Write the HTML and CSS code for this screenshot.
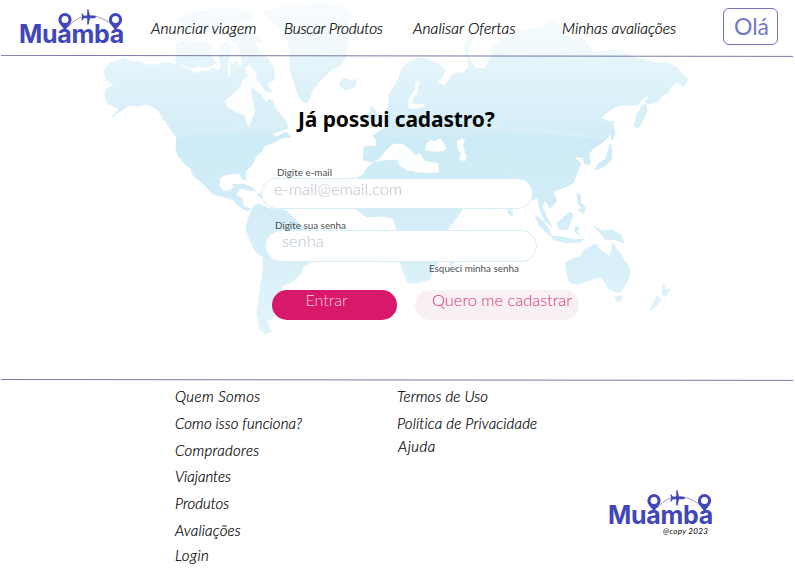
FILE: index.html
```html
<!DOCTYPE html>
<html lang="pt-BR">
<head>
<meta charset="utf-8">
<title>Muamba</title>
<link rel="stylesheet" href="styles.css">
</head>
<body>
<svg class="map" viewBox="0 0 795 380" aria-hidden="true">
  <defs>
    <linearGradient id="land" x1="0" y1="0" x2="0" y2="350" gradientUnits="userSpaceOnUse">
      <stop offset="0" stop-color="#f2f9fd"/><stop offset=".15" stop-color="#e6f5fb"/>
      <stop offset=".35" stop-color="#d7eff8"/><stop offset=".4" stop-color="#cdebf6"/>
      <stop offset=".6" stop-color="#d3edf8"/><stop offset="1" stop-color="#e4f5fb"/>
    </linearGradient>
  </defs>
  <g class="land" fill="url(#land)" stroke="url(#land)">
    <path d="M104 72L107 66 110 63 117 61 124 58 132 62 140 62 147 65 155 65 163 63 170 63 180 66 186 69 192 71 197 74 202 71 208 72 214 68 218 71 222 66 228 60 233 65 236 60 240 68 244 60 249 66 250 75 246 80 252 88 257 92 260 94 266 102 269 99 273 101 275 108 278 112 285 120 288 128 280 131 271 134 277 137 286 132 291 137 282 138 272 143 264 146 262 151 256 156 252 165 245 172 246 180 242 178 239 173 228 174 220 177 219 186 224 192 231 190 235 186 240 187 236 195 242 199 244 207 251 209 247 211 239 206 232 199 224 197 213 194 206 187 200 180 193 170 186 165 178 156 176 147 177 138 170 128 163 118 157 109 147 104 138 106 130 105 122 110 112 117 119 109 108 104 105 96 106 89 114 85 107 80z"/>
    <path d="M191 170L199 179 206 187 202 183 194 176z"/>
    <path d="M176 44L185 40 194 43 203 41 212 46 211 56 216 63 208 67 199 66 192 68 184 65 176 65zM221 44L227 42 231 49 229 60 233 67 229 72 222 68 219 57zM237 46L247 42 256 45 262 54 269 60 275 71 274 80 267 84 272 93 265 90 259 81 251 78 246 71 250 64 242 60z"/>
    <path d="M176 20L194 12 220 8 240 9 254 15 246 22 228 26 220 34 204 31 192 33zM230 35L244 29 254 34 262 41 248 45 233 43z"/>
    <path d="M263 12L285 6 323 3 346 9 354 14 348 22 349 36 346 56 341 65 330 71 320 81 312 90 309 100 306 103 301 100 297 91 293 79 290 70 290 56 288 42 280 27 268 18z"/>
    <path d="M340 81L345 78 351 81 356 79 356 84 353 88 345 90 340 86z"/>
    <path d="M232 185L243 184 251 187 256 191 248 190 240 188zM257 194L265 194 268 196 260 197z"/>
    <path d="M253 207L258 204 270 209 285 210 293 217 301 225 313 234 321 240 320 250 312 262 303 267 300 275 290 283 282 286 280 296 276 306 274 317 267 321 271 332 266 334 260 330 257 313 259 300 261 285 263 270 263 257 255 251 250 240 246 229 248 220z"/>
    <path d="M368 117L371 111 371 106 375 110 378 116 377 121 369 122zM361 116L366 115 366 120 361 122z"/>
    <path d="M363 160L364 153 364 147 377 146 376 139 373 136 380 131 386 126 389 121 387 112 389 103 389 94 397 82 403 67 411 61 420 58 430 60 440 65 445 70 443 76 437 83 445 86 451 76 457 73 463 73 469 67 468 57 470 60 475 68 485 69 491 57 493 48 497 43 507 36 517 33 530 29 540 27 550 20 558 23 563 30 573 40 580 38 587 42 593 53 603 51 617 50 625 52 633 57 645 60 657 63 667 63 677 68 688 80 683 87 677 82 670 88 668 93 663 95 658 102 648 104 645 102 650 94 644 98 637 105 628 105 620 105 610 110 600 118 610 122 611 130 608 137 603 142 595 147 589 153 590 164 585 164 583 157 573 157 581 163 577 173 573 183 565 187 557 190 553 192 557 200 554 204 550 208 545 200 542 207 546 215 552 227 545 221 540 210 538 198 530 200 518 207 509 210 500 204 487 199 477 199 466 208 455 208 440 180 440 173 438 163 425 162 415 154 404 144 393 143 385 151 380 158 374 162z"/>
    <path d="M357 178L363 175 368 167 373 163 383 161 397 160 400 166 417 173 443 173 450 190 457 204 462 210 457 217 447 230 438 242 439 262 433 270 430 279 420 282 408 283 404 274 400 262 402 248 397 230 393 218 380 216 367 217 357 210 349 200 348 190z"/>
    <path d="M450 262L452 252 456 250 455 261 451 267zM508 210L513 212 512 216 509 214z"/>
    <path d="M565 263L572 259 580 257 584 250 590 247 596 244 600 250 610 257 612 249 613 243 617 250 620 253 624 260 628 265 630 272 628 280 620 293 614 291 608 288 604 281 600 277 590 280 579 284 570 283 567 275z"/>
    <path d="M615 297L622 296 621 301 617 302zM663 284L666 290 671 289 665 296 662 294zM657 296L661 299 656 306 650 310 653 304zM594 226L603 231 613 230 621 235 624 243 614 239 606 240 601 234zM557 223L563 218 570 212 573 215 570 223 567 230 559 229zM535 215L543 221 550 231 551 236 545 231 539 225zM551 236L562 237 575 240 584 239 581 242 566 243 554 240zM575 226L580 228 577 231 580 235 575 232zM577 193L581 196 580 202 585 207 584 213 578 210 582 208 578 203z"/>
    <path d="M634 126L637 114 642 106 646 104 647 111 643 120 638 128zM609 122L613 121 615 134 612 140zM610 144L612 150 611 160 605 166 595 170 598 164 606 159z"/>
    <path d="M464 53L466 42 471 34 478 29 474 38 469 47 467 57z"/>
  </g>
  <g fill="#fdfefe">
    <path d="M225 101L233 94 240 87 243 80 248 75 244 68 249 65 256 72 257 82 251 89 253 101 255 111 251 121 249 127 246 122 244 115 236 112 227 107z"/>
    <path d="M425 150L426 145 430 140 435 141 440 138 443 142 447 148 444 151 437 152zM457 147L457 141 462 138 465 140 463 146 467 158 465 161 459 160 461 154zM408 108L409 98 415 89 415 82 419 81 418 92 412 100 413 104 425 104 424 107 413 109z"/>
    <path d="M388 149L393 145 399 151 403 157 407 158 402 149 410 155 413 157 420 153 425 161 438 163 435 172 428 173 417 170 408 171 400 166 397 158z"/>
    <path d="M227 75L229 58 231 58 230 76zM212 46L216 62 219 63 216 46zM234 46L238 62 242 65 239 49z"/>
  </g>
  <path d="M178 137Q235 131 286 128L284 123 172 129zM475 130Q545 132 602 140L606 136Q550 127 475 125z" fill="#fff" opacity=".14"/>
</svg>

<svg class="symbols" aria-hidden="true">
  <symbol id="route" viewBox="0 0 66 23">
    <path d="M10 18Q30-5 57 18" fill="none" stroke="#85879a" stroke-width=".8"/>
    <path fill="#4146bb" fill-rule="evenodd" d="M7 4a6.600 6.600 0 0 1 6.600 6.600C13.600 15 9.500 17.500 7 21.500 4.500 17.500.4 15 .4 10.600A6.600 6.600 0 0 1 7 4zm0 3a3.500 3.500 0 1 0 0 7 3.500 3.500 0 0 0 0-7zM57.500 4a6.600 6.600 0 0 1 6.600 6.600c0 4.400-4.100 6.900-6.600 10.900-2.500-4-6.600-6.500-6.600-10.900A6.600 6.600 0 0 1 57.500 4zm0 3a3.500 3.500 0 1 0 0 7 3.500 3.500 0 0 0 0-7z"/>
    <path fill="#4146bb" d="M38 8q-.5-1.200-2-1.200h-4L30.500.5h-1.300v6.300H26l-1.600-2.200h-1.100L24.200 8l-.9 3.400h1.100L26 9.200h3.200v6.300h1.300L32 9.200h4q1.500 0 2-1.200z"/>
  </symbol>
</svg>

<header class="header">
  <div class="logo"><span class="logo-name">Muamba</span><svg class="logo-route"><use href="#route"/></svg></div>
  <a class="nav-link n1">Anunciar viagem</a>
  <a class="nav-link n2">Buscar Produtos</a>
  <a class="nav-link n3">Analisar Ofertas</a>
  <a class="nav-link n4">Minhas avaliações</a>
  <button class="hello">Olá</button>
</header>
<svg class="rule" viewBox="0 0 795 2"><path d="M1 .4L793 1.400"/></svg>

<main class="main">
  <h1 class="title">Já possui cadastro?</h1>
  <form class="form">
    <label class="label l1">Digite e-mail</label>
    <div class="field f1"><span>e-mail@email.com</span></div>
    <label class="label l2">Digite sua senha</label>
    <div class="field f2"><span>senha</span></div>
    <a class="label forgot">Esqueci minha senha</a>
    <div class="actions">
      <button type="button" class="btn enter"><span>Entrar</span></button>
      <button type="button" class="btn join"><span>Quero me cadastrar</span></button>
    </div>
  </form>
</main>

<svg class="rule" viewBox="0 0 795 2"><path d="M1 .5L793 1.400"/></svg>
<footer class="footer">
  <ul class="links">
    <li class="a1">Quem Somos</li><li class="a2">Como isso funciona?</li><li class="a3">Compradores</li><li class="a4">Viajantes</li><li class="a5">Produtos</li><li class="a6">Avaliações</li><li class="a7">Login</li>
  </ul>
  <ul class="links">
    <li class="b1">Termos de Uso</li><li class="b2">Política de Privacidade</li><li class="b3">Ajuda</li>
  </ul>
  <div class="brand">
    <div class="logo"><span class="logo-name">Muamba</span><svg class="logo-route"><use href="#route"/></svg></div>
    <small class="copy">@copy 2023</small>
  </div>
</footer>
</body>
</html>
```
FILE: styles.css
```css
* { box-sizing: border-box; }
body { margin: 0; width: 795px; height: 575px; overflow: hidden; background: #fff; font-family: Lato, sans-serif; color: #000; position: relative; }
.map { position: absolute; left: 0; top: 0; width: 795px; height: 380px; z-index: -1; }
.land { stroke-width: 1; stroke-linejoin: round; }
.symbols { position: absolute; width: 0; height: 0; }
.header { height: 55px; display: grid; grid-template-columns: 132px 133px 129px 149px 161px 55px; padding-left: 19px; align-items: start; background: rgba(255,255,255,.45); }
.nav-link { font-style: italic; font-weight: 300; font-size: 15.500px; line-height: 20px; margin-top: 18px; white-space: nowrap; -webkit-text-stroke: .2px #000; }
.n1 { letter-spacing: .07px; }
.n2 { letter-spacing: -.25px; }
.n3 { letter-spacing: .08px; }
.n4 { letter-spacing: -.05px; }
.hello { margin: 8px 0 0; width: 55px; height: 37px; padding: 0 0 1px 2px; border: 1px solid #7471bd; border-radius: 6px; background: #fff; font: 400 23px/34px Lato, sans-serif; color: #7478c4; }
.rule { display: block; width: 795px; height: 2px; }
.rule path { fill: none; stroke: #7b79a8; stroke-width: 1; }
.logo { position: relative; width: 108px; height: 47px; padding-top: 21px; }
.logo-name { display: block; font: 700 25px/26px Inter, sans-serif; letter-spacing: -.3px; color: #4146bb; white-space: nowrap; }
.logo-route { position: absolute; left: 38.500px; top: 9px; width: 66px; height: 23px; }
.main { height: 322px; padding-top: 48px; }
.title { margin: 0; padding-left: 298px; font: 700 21px/28px "Noto Sans", sans-serif; letter-spacing: -.12px; color: #050505; white-space: nowrap; }
.form { padding: 33px 0 0 261px; }
.label { display: block; font-size: 9.850px; line-height: 12px; height: 12px; color: #4b4f52; white-space: nowrap; }
.l1 { margin-left: 16px; }
.l2 { margin: 10px 0 0 14px; }
.field { width: 272px; height: 31px; border: 1px solid #d8eef6; border-radius: 16px; background: #fff; color: #b9bfcf; font-weight: 300; font-size: 16.500px; line-height: 20px; white-space: nowrap; }
.f1 { padding-left: 12px; }
.f2 { margin: -1px 0 0 4px; padding-left: 16px; height: 32px; }
.forgot { margin: 0 0 0 168px; }
.actions { display: flex; gap: 18px; margin: 16px 0 0 10.500px; }
.btn { height: 30px; border: 0; border-radius: 15px; padding: 0; text-align: left; font: 300 16px/18px Lato, sans-serif; display: block; white-space: nowrap; }
.btn span { display: block; height: 30px; line-height: 20px; }
.enter { width: 125.500px; padding-left: 34px; background: #d81869; color: #f8cfe0; }
.join { width: 164px; padding-left: 17px; background: #f8f0f3; color: #dc347d; font-size: 16.400px; }
.footer { display: grid; grid-template-columns: 222px 211px 1fr; padding: 2px 0 0 175px; }
.links { list-style: none; margin: 0; padding: 0; font-style: italic; font-weight: 300; font-size: 15px; line-height: 27px; white-space: nowrap; -webkit-text-stroke: .2px #000; }
.links li { height: 26.800px; }
.a1 { letter-spacing: .4px; }
.a2 { letter-spacing: .08px; }
.a3 { letter-spacing: .3px; }
.a6 { letter-spacing: .2px; }
.b1, .b2 { letter-spacing: .15px; }
.links .a7 { margin-top: -2px; letter-spacing: .5px; }
.links .b3 { margin: -4px 0 0 1px; letter-spacing: .5px; }
.brand { padding-top: 98px; }
.copy { display: block; margin: -2px 0 0 55px; font-size: 8px; line-height: 10px; font-style: italic; font-weight: 400; letter-spacing: .3px; }
```
